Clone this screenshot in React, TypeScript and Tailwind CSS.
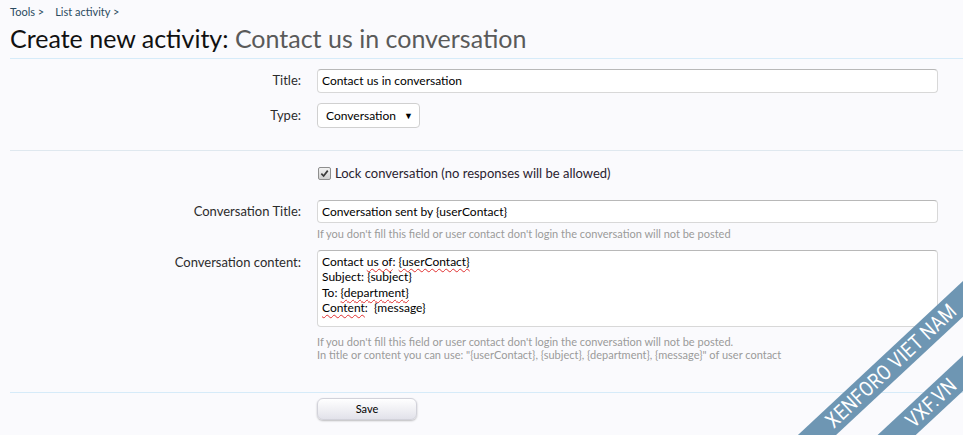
import React from "react";

const font = "font-['Lato','Liberation_Sans',sans-serif]";

function Label({ children, className = "" }: { children: React.ReactNode; className?: string }) {
  return (
    <div className={`w-[292px] shrink-0 pr-[1px] text-right text-[13px] text-[#2c2c2c] ${className}`}>
      {children}
    </div>
  );
}

function Hint({ children }: { children: React.ReactNode }) {
  return <p className="text-[11px] leading-[13px] text-[#9a9a9a]">{children}</p>;
}

function Squiggle({ children }: { children: React.ReactNode }) {
  return (
    <span className="underline decoration-wavy decoration-[#e03030] decoration-1 underline-offset-[2px]">
      {children}
    </span>
  );
}

function Watermark() {
  return (
    <div className="pointer-events-none absolute inset-0 overflow-hidden">
      <div className="absolute left-[691px] top-[353px] flex h-[26px] w-[400px] -rotate-[43deg] items-center justify-center bg-[#6e96b3]">
        <span className="inline-block scale-x-[0.84] font-['Roboto',sans-serif] text-[21px] leading-none tracking-[0.5px] text-white">
          XENFORO VIET NAM
        </span>
      </div>
      <div className="absolute left-[731px] top-[390px] flex h-[26px] w-[400px] -rotate-[43deg] items-center justify-center bg-[#6e96b3]">
        <span className="inline-block scale-x-[0.84] font-['Roboto',sans-serif] text-[21px] leading-none tracking-[0.5px] text-white">
          VXF.VN
        </span>
      </div>
    </div>
  );
}

export default function App() {
  return (
    <div className={`relative h-[435px] w-[963px] overflow-hidden bg-[#fafafd] ${font}`}>
      <div className="pl-[10px]">
        <nav className="flex gap-[11px] pt-[5px] text-[11px] leading-[14px] text-[#2b4a60]">
          <span>Tools &gt;</span>
          <span>List activity &gt;</span>
        </nav>
        <h1 className="mt-[5px] text-[25px] leading-[28px] text-[#111]">
          Create new activity: <span className="text-[#5a5a5a]">Contact us in conversation</span>
        </h1>
        <div className="mt-[6px] border-t border-[#d6ebf9]" />

        <div className="mt-[10px] flex items-center gap-[15px]">
          <Label>Title:</Label>
          <div className="mr-[25px] flex h-[24px] flex-1 items-center rounded-[4px] border border-[#d8d8d8] border-t-[#b8b8b8] bg-white px-[4px] text-[12px] text-black">
            Contact us in conversation
          </div>
        </div>

        <div className="mt-[10px] flex items-center gap-[15px]">
          <Label>Type:</Label>
          <div className="flex h-[25px] w-[103px] items-center justify-between rounded-[4px] border border-[#d0d0d0] bg-white pl-[8px] pr-[6px] text-[12px] text-black">
            <span>Conversation</span>
            <span className="text-[9px]">▼</span>
          </div>
        </div>

        <div className="mt-[22px] border-t border-[#dfe8ef]" />

        <div className="mt-[14px] flex items-center gap-[4px] pl-[308px]">
          <span className="flex h-[13px] w-[13px] items-center justify-center rounded-[2px] border border-[#8e8e8e] bg-gradient-to-b from-[#f2f2f2] to-[#cfcfcf]">
            <svg viewBox="0 0 10 10" className="h-[9px] w-[9px]">
              <path d="M1.5 5.2 L4 7.8 L8.6 1.8" fill="none" stroke="#3a3a3a" strokeWidth="1.9" />
            </svg>
          </span>
          <span className="text-[13px] leading-[16px] text-[#2a2330]">
            Lock conversation (no responses will be allowed)
          </span>
        </div>

        <div className="mt-[19px] flex items-center gap-[15px]">
          <Label>Conversation Title:</Label>
          <div className="mr-[25px] flex h-[23px] flex-1 items-center rounded-[4px] border border-[#d8d8d8] border-t-[#b8b8b8] bg-white px-[4px] text-[12px] text-black">
            Conversation sent by {"{userContact}"}
          </div>
        </div>
        <div className="mt-[4px] pl-[307px]">
          <Hint>If you don't fill this field or user contact don't login the conversation will not be posted</Hint>
        </div>

        <div className="mt-[10px] flex items-start gap-[15px]">
          <Label className="pt-[3px]">Conversation content:</Label>
          <div className="mr-[25px] h-[77px] flex-1 rounded-[4px] border border-[#d8d8d8] border-t-[#b8b8b8] bg-white px-[4px] pt-[3px] text-[12px] leading-[15.3px] text-black">
            <div>
              Contact <Squiggle>us of</Squiggle>: <Squiggle>{"{userContact}"}</Squiggle>
            </div>
            <div>Subject: {"{subject}"}</div>
            <div>
              To: <Squiggle>{"{department}"}</Squiggle>
            </div>
            <div>
              <Squiggle>Content</Squiggle>:&nbsp; {"{message}"}
            </div>
          </div>
        </div>
        <div className="mt-[8px] pl-[307px]">
          <Hint>If you don't fill this field or user contact don't login the conversation will not be posted.</Hint>
          <Hint>In title or content you can use: "{"{userContact}"}, {"{subject}"}, {"{department}"}, {"{message}"}" of user contact</Hint>
        </div>

        <div className="mt-[31px] border-t border-[#d6ebf9]" />

        <div className="mt-[5px] pl-[307px]">
          <button className="flex h-[22px] w-[100px] items-center justify-center rounded-[6px] border border-[#d2d2da] bg-gradient-to-b from-white to-[#e2e2ea] text-[11px] text-black shadow-[0_1px_2px_rgba(0,0,0,0.25)]">
            Save
          </button>
        </div>
      </div>
      <Watermark />
    </div>
  );
}
